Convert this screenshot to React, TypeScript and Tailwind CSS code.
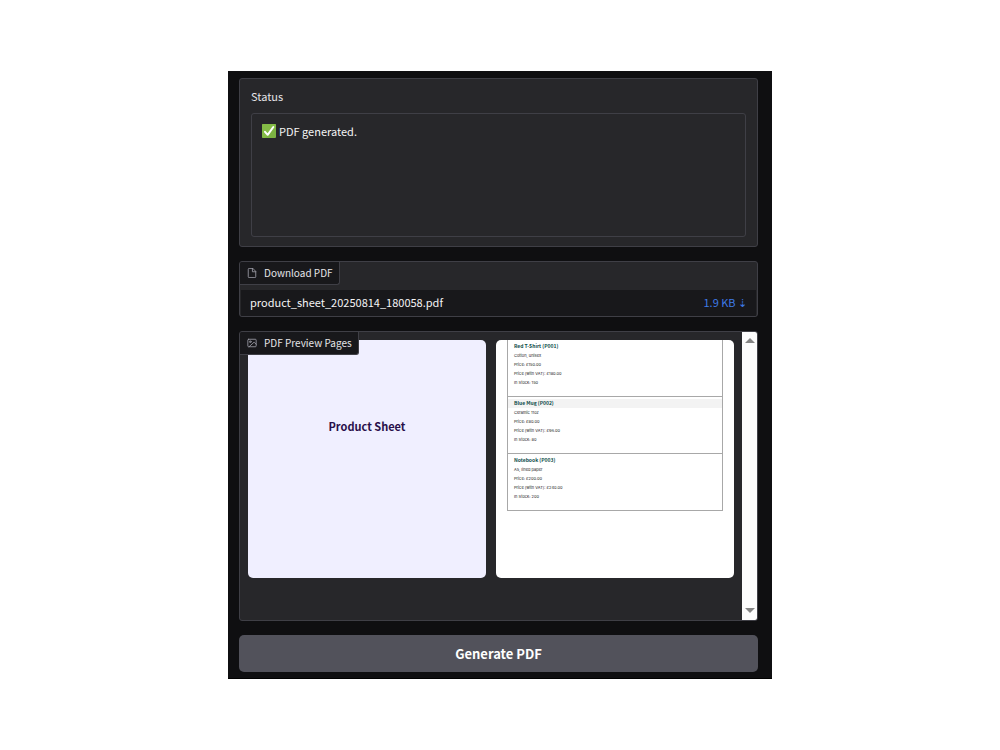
import { useState } from 'react';
import type { ReactNode } from 'react';

interface Product {
  name: string;
  code: string;
  description: string;
  price: string;
  priceVat: string;
  stock: number;
}

const products: Product[] = [
  { name: 'Red T-Shirt', code: 'P001', description: 'Cotton, unisex', price: '£150.00', priceVat: '£180.00', stock: 150 },
  { name: 'Blue Mug', code: 'P002', description: 'Ceramic 11oz', price: '£80.00', priceVat: '£96.00', stock: 80 },
  { name: 'Notebook', code: 'P003', description: 'A5, lined paper', price: '£200.00', priceVat: '£240.00', stock: 200 },
];

function FileIcon() {
  return (
    <svg viewBox="0 0 24 24" className="w-[10px] h-[10px] text-zinc-400" fill="none" stroke="currentColor" strokeWidth="2" strokeLinecap="round" strokeLinejoin="round" aria-hidden="true">
      <path d="M13 1H5a2 2 0 0 0-2 2v18a2 2 0 0 0 2 2h14a2 2 0 0 0 2-2V9z" />
      <path d="M13 1v8h8" />
    </svg>
  );
}

function ImageIcon() {
  return (
    <svg viewBox="0 0 24 24" className="w-[10px] h-[10px] text-zinc-400" fill="none" stroke="currentColor" strokeWidth="2" strokeLinecap="round" strokeLinejoin="round" aria-hidden="true">
      <rect x="2" y="3" width="20" height="18" rx="2" />
      <circle cx="8" cy="9" r="2" />
      <path d="M22 15l-5-5L5 21" />
    </svg>
  );
}

function CheckEmoji() {
  return (
    <svg viewBox="0 0 14 14" className="w-[14px] h-[14px]" aria-hidden="true">
      <rect width="14" height="14" rx="1" fill="#7cb342" />
      <path d="M0 0h14v3L3 14H1a1 1 0 0 1-1-1z" fill="#8bc34a" opacity="0.5" />
      <path d="M3 7.8l2.7 3L11.3 3" fill="none" stroke="#fff" strokeWidth="2" strokeLinecap="round" strokeLinejoin="round" />
    </svg>
  );
}

function BlockLabel({ icon, children }: { icon: ReactNode; children: ReactNode }) {
  return (
    <h2 className="flex items-center gap-[7px] w-fit h-[23px] pl-[7px] pr-[6px] bg-[#18181b] border-r border-b border-[#3f3f46] rounded-br-[3px] text-[10px] leading-4 text-zinc-200">
      {icon}
      {children}
    </h2>
  );
}

function ProductBlock({ product, shaded }: { product: Product; shaded: boolean }) {
  return (
    <div className="pt-[2px] pb-[9px] border-b border-x border-[#a8a8a8] text-[4px] leading-[9px] text-[#1a1a1a] font-['Inter',sans-serif]">
      <h3 className={`pl-[6px] pb-px font-bold text-[5px] leading-[8px] text-[#0b4a47] font-['Noto_Sans_CJK_SC',sans-serif] ${shaded ? 'bg-[#f3f3f3]' : ''}`}>
        {product.name} ({product.code})
      </h3>
      <p className="pl-[6px]">{product.description}</p>
      <p className="pl-[6px]">Price: {product.price}</p>
      <p className="pl-[6px]">Price (with VAT): {product.priceVat}</p>
      <p className="pl-[6px]">In Stock: {product.stock}</p>
    </div>
  );
}

export default function App() {
  const [status, setStatus] = useState('PDF generated.');

  return (
    <div className="min-h-screen flex items-center justify-center bg-white font-['Noto_Sans_CJK_SC','Noto_Sans',sans-serif]">
      <main className="w-full max-w-[544px] flex flex-col gap-[14px] pl-[11px] pr-[14px] pt-[7px] pb-[6px] bg-[#0f0f11] border-b border-black">

        {/* Status */}
        <section className="px-[11px] pt-[10px] pb-[9px] bg-[#27272a] border border-[#3f3f46] rounded-[3px]">
          <label htmlFor="status" className="block mb-[10px] text-[11px] leading-[14px] text-zinc-200">Status</label>
          <div className="flex gap-[3px] p-[10px] border border-[#3f3f46] rounded-[3px]">
            <CheckEmoji />
            <textarea
              id="status"
              rows={5}
              value={status}
              onChange={(e) => setStatus(e.target.value)}
              className="flex-1 h-[102px] resize-none bg-transparent outline-none text-[11px] leading-[14px] text-zinc-100"
            />
          </div>
        </section>

        {/* Download */}
        <section className="bg-[#27272a] border border-[#3f3f46] rounded-[3px] overflow-hidden">
          <BlockLabel icon={<FileIcon />}>Download PDF</BlockLabel>
          <div className="mt-[5px] px-px">
            <table className="w-full text-[11px] leading-6">
              <tbody>
                <tr className="bg-[#18181b]">
                  <td className="p-0 pb-[2px] pl-[9px] text-zinc-100">product_sheet_20250814_180058.pdf</td>
                  <td className="p-0 pb-[2px] pr-[9px] text-right">
                    <a href="#download" className="text-[#3f7be8]">1.9 KB ⇣</a>
                  </td>
                </tr>
              </tbody>
            </table>
          </div>
        </section>

        {/* Preview */}
        <section className="relative flex bg-[#27272a] border border-[#3f3f46] rounded-[3px] overflow-hidden">
          <div className="absolute top-0 left-0">
            <BlockLabel icon={<ImageIcon />}>PDF Preview Pages</BlockLabel>
          </div>
          <div className="flex-1 grid grid-cols-2 gap-[10px] px-2 pt-2 pb-[42px]">
            <button aria-label="Page 1" className="aspect-square flex flex-col items-center pt-[78px] bg-[#f0efff] rounded-[5px] text-[11px] leading-4 font-bold text-[#29104a]">
              Product Sheet
            </button>
            <button aria-label="Page 2" className="aspect-square flex flex-col px-[11px] bg-white rounded-[5px] text-left overflow-hidden">
              <div className="w-full">
                {products.map((product, i) => (
                  <ProductBlock key={product.code} product={product} shaded={i === 1} />
                ))}
              </div>
            </button>
          </div>
          <div className="w-[15px] flex flex-col items-center justify-between py-[6px] bg-[#fcfcfc]">
            <svg viewBox="0 0 10 6" className="w-[10px] h-[6px]" aria-hidden="true"><path d="M0 5L5 0l5 5z" fill="#858585" /></svg>
            <svg viewBox="0 0 10 6" className="w-[10px] h-[6px]" aria-hidden="true"><path d="M0 0l5 5 5-5z" fill="#858585" /></svg>
          </div>
        </section>

        <button className="h-[37px] bg-[#52525b] rounded-[5px] text-[13px] leading-5 font-bold text-white">Generate PDF</button>
      </main>
    </div>
  );
}
